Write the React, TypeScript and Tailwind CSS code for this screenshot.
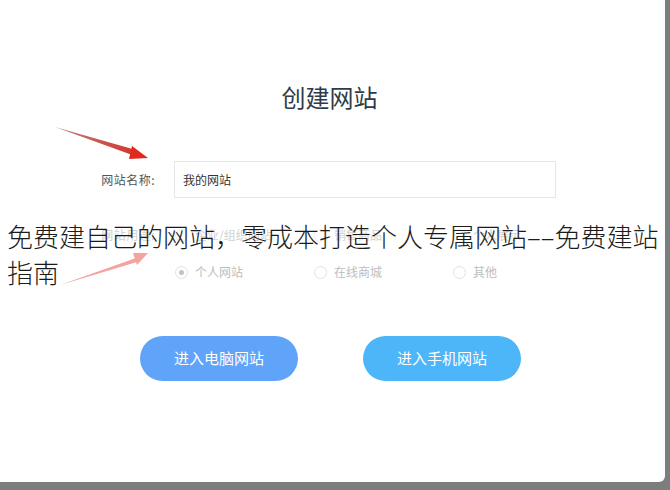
import { useState } from 'react'

const cjk = { fontFamily: '"Noto Sans CJK SC", "Noto Sans", sans-serif' }

function Radio({ label, checked, faint }: { label: string; checked?: boolean; faint?: boolean }) {
  return (
    <label className="flex items-center gap-[7px] w-[139px]">
      <span
        className={`w-[13px] h-[13px] rounded-full border flex items-center justify-center ${
          faint ? 'border-[#eeeeee]' : 'border-[#e2e2e2]'
        }`}
      >
        {checked && <span className="w-[5px] h-[5px] rounded-full bg-[#c4c4c4]" />}
      </span>
      <span className={faint ? 'text-[#d2d2d2]' : 'text-[#bdbdbd]'}>{label}</span>
    </label>
  )
}

export default function App() {
  const [name, setName] = useState('我的网站')

  return (
    <div className="relative w-[670px] h-[490px] bg-[#7d7d7d] overflow-hidden" style={cjk}>
      <div className="w-[665px] h-[482px] bg-white rounded-br-[6px] flex flex-col">
        <h1 className="mt-[81px] text-center text-[24px] leading-[32px] text-[#2f3b48] font-normal pr-[6px]">
          创建网站
        </h1>

        <div className="mt-[48px] flex items-center pl-[95px] text-[12px]">
          <span className="w-[60px] text-right text-[#555] tracking-[0.5px]">网站名称:</span>
          <input
            value={name}
            onChange={(e) => setName(e.target.value)}
            className="ml-[19px] w-[382px] h-[37px] border border-[#e6e6e6] px-[8px] text-[12px] text-[#333] outline-none"
          />
        </div>

        <div className="mt-[25px] h-[24px] flex items-center pl-[95px] text-[12px]">
          <span className="w-[60px] text-right text-[#cfcfcf] tracking-[0.5px]">网站用途:</span>
          <div className="ml-[20px] flex">
            <Radio label="企业/组织网站" faint />
            <Radio label="销售商品" faint />
            <Radio label="个人展示" faint />
          </div>
        </div>

        <div className="mt-[13px] h-[24px] flex items-center pl-[175px] text-[12px]">
          <Radio label="个人网站" checked />
          <Radio label="在线商城" />
          <Radio label="其他" />
        </div>

        <div className="mt-[52px] flex pl-[140px] gap-[65px]">
          <button className="w-[158px] h-[45px] rounded-full bg-[#5fa4f8] text-white text-[15px]">
            进入电脑网站
          </button>
          <button className="w-[158px] h-[45px] rounded-full bg-[#4cb6f8] text-white text-[15px]">
            进入手机网站
          </button>
        </div>
      </div>

      <svg className="absolute left-0 top-0 pointer-events-none" width="670" height="490">
        <defs>
          <linearGradient id="ra" x1="55" y1="127" x2="148" y2="158" gradientUnits="userSpaceOnUse">
            <stop offset="0" stopColor="#9a2a2a" stopOpacity="0.6" />
            <stop offset="1" stopColor="#e0281e" />
          </linearGradient>
        </defs>
        <polygon points="55,127 136,150 135,156" fill="url(#ra)" />
        <polygon points="132,146 148,158 129,159" fill="#e0281e" />
        <polygon points="60,285 136,258 137,262" fill="#f3a3a0" />
        <polygon points="133,253 148,253 137,265" fill="#f3a3a0" />
      </svg>

      <div
        className="absolute left-[7px] top-[218px] w-[663px] text-[26px] leading-[36px] text-[#1c1c1c] font-light"
        style={cjk}
      >
        免费建自己的网站，零成本打造个人专属网站––免费建站指南
      </div>
    </div>
  )
}
